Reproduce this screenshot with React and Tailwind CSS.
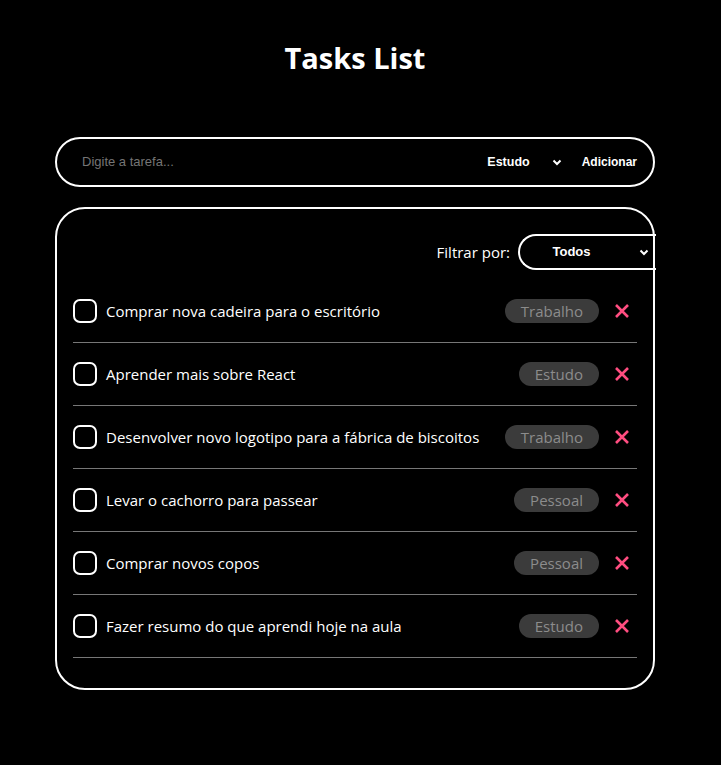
import React from "react";

const tasks = [
  { text: "Comprar nova cadeira para o escritório", tag: "Trabalho" },
  { text: "Aprender mais sobre React", tag: "Estudo" },
  { text: "Desenvolver novo logotipo para a fábrica de biscoitos", tag: "Trabalho" },
  { text: "Levar o cachorro para passear", tag: "Pessoal" },
  { text: "Comprar novos copos", tag: "Pessoal" },
  { text: "Fazer resumo do que aprendi hoje na aula", tag: "Estudo" },
];

function Chevron() {
  return (
    <svg width="10" height="7" viewBox="0 0 10 7" fill="none">
      <path d="M1.5 1.5 L5 5 L8.5 1.5" stroke="white" strokeWidth="2" />
    </svg>
  );
}

export default function App() {
  const ui = { fontFamily: '"Open Sans", "Noto Sans", sans-serif' };
  const arial = { fontFamily: '"Liberation Sans", Arial, sans-serif' };
  return (
    <div className="min-h-[765px] w-full bg-black text-white" style={ui}>
      <div className="ml-[55px] flex w-[600px] flex-col pt-[36px]">
        <h1 className="text-center text-[29px] font-bold leading-[44px]">Tasks List</h1>
        <div
          className="mt-[57px] flex h-[50px] items-center rounded-full border-2 border-white pl-[25px] pr-[16px]"
          style={arial}
        >
          <input
            className="flex-1 bg-transparent text-[13px] text-white outline-none placeholder:text-[#757575]"
            placeholder="Digite a tarefa..."
          />
          <div className="flex items-center text-[12.5px] font-bold">
            <span className="ml-[2px]">Estudo</span>
            <span className="ml-[22px] flex items-center">
              <Chevron />
            </span>
          </div>
          <button className="ml-[20px] text-[12px] font-bold text-white">Adicionar</button>
        </div>

        <div className="mt-[20px] rounded-[30px] border-2 border-white px-[16px] pb-[30px] pt-[25px]">
          <div className="flex items-center justify-end">
            <span className="text-[15px]">Filtrar por:</span>
            <div
              className="-mr-[19px] ml-[8px] flex h-[36px] w-[138px] items-center rounded-l-full border-y-2 border-l-2 border-white pr-[7px]"
              style={arial}
            >
              <span className="mr-[16px] flex-1 text-center text-[13px] font-bold">Todos</span>
              <Chevron />
            </div>
          </div>
          <div className="mt-[10px] flex flex-col">
            {tasks.map((t, i) => (
              <div key={i} className="flex items-center border-b border-[#777] py-[19px]">
                <span className="h-[24px] w-[24px] shrink-0 rounded-[7px] border-2 border-white" />
                <span className="ml-[9px] flex-1 text-[15px] leading-[24px]">{t.text}</span>
                <span className="rounded-full bg-[#3b3b3b] px-[16px] text-[15px] leading-[24px] text-[#8c8c8c]">
                  {t.tag}
                </span>
                <span className="ml-[15px] mr-[7px] flex items-center">
                  <svg width="16" height="16" viewBox="0 0 16 16">
                    <path d="M2 2 L14 14 M14 2 L2 14" stroke="#ff4d80" strokeWidth="2.6" />
                  </svg>
                </span>
              </div>
            ))}
          </div>
        </div>
      </div>
    </div>
  );
}
